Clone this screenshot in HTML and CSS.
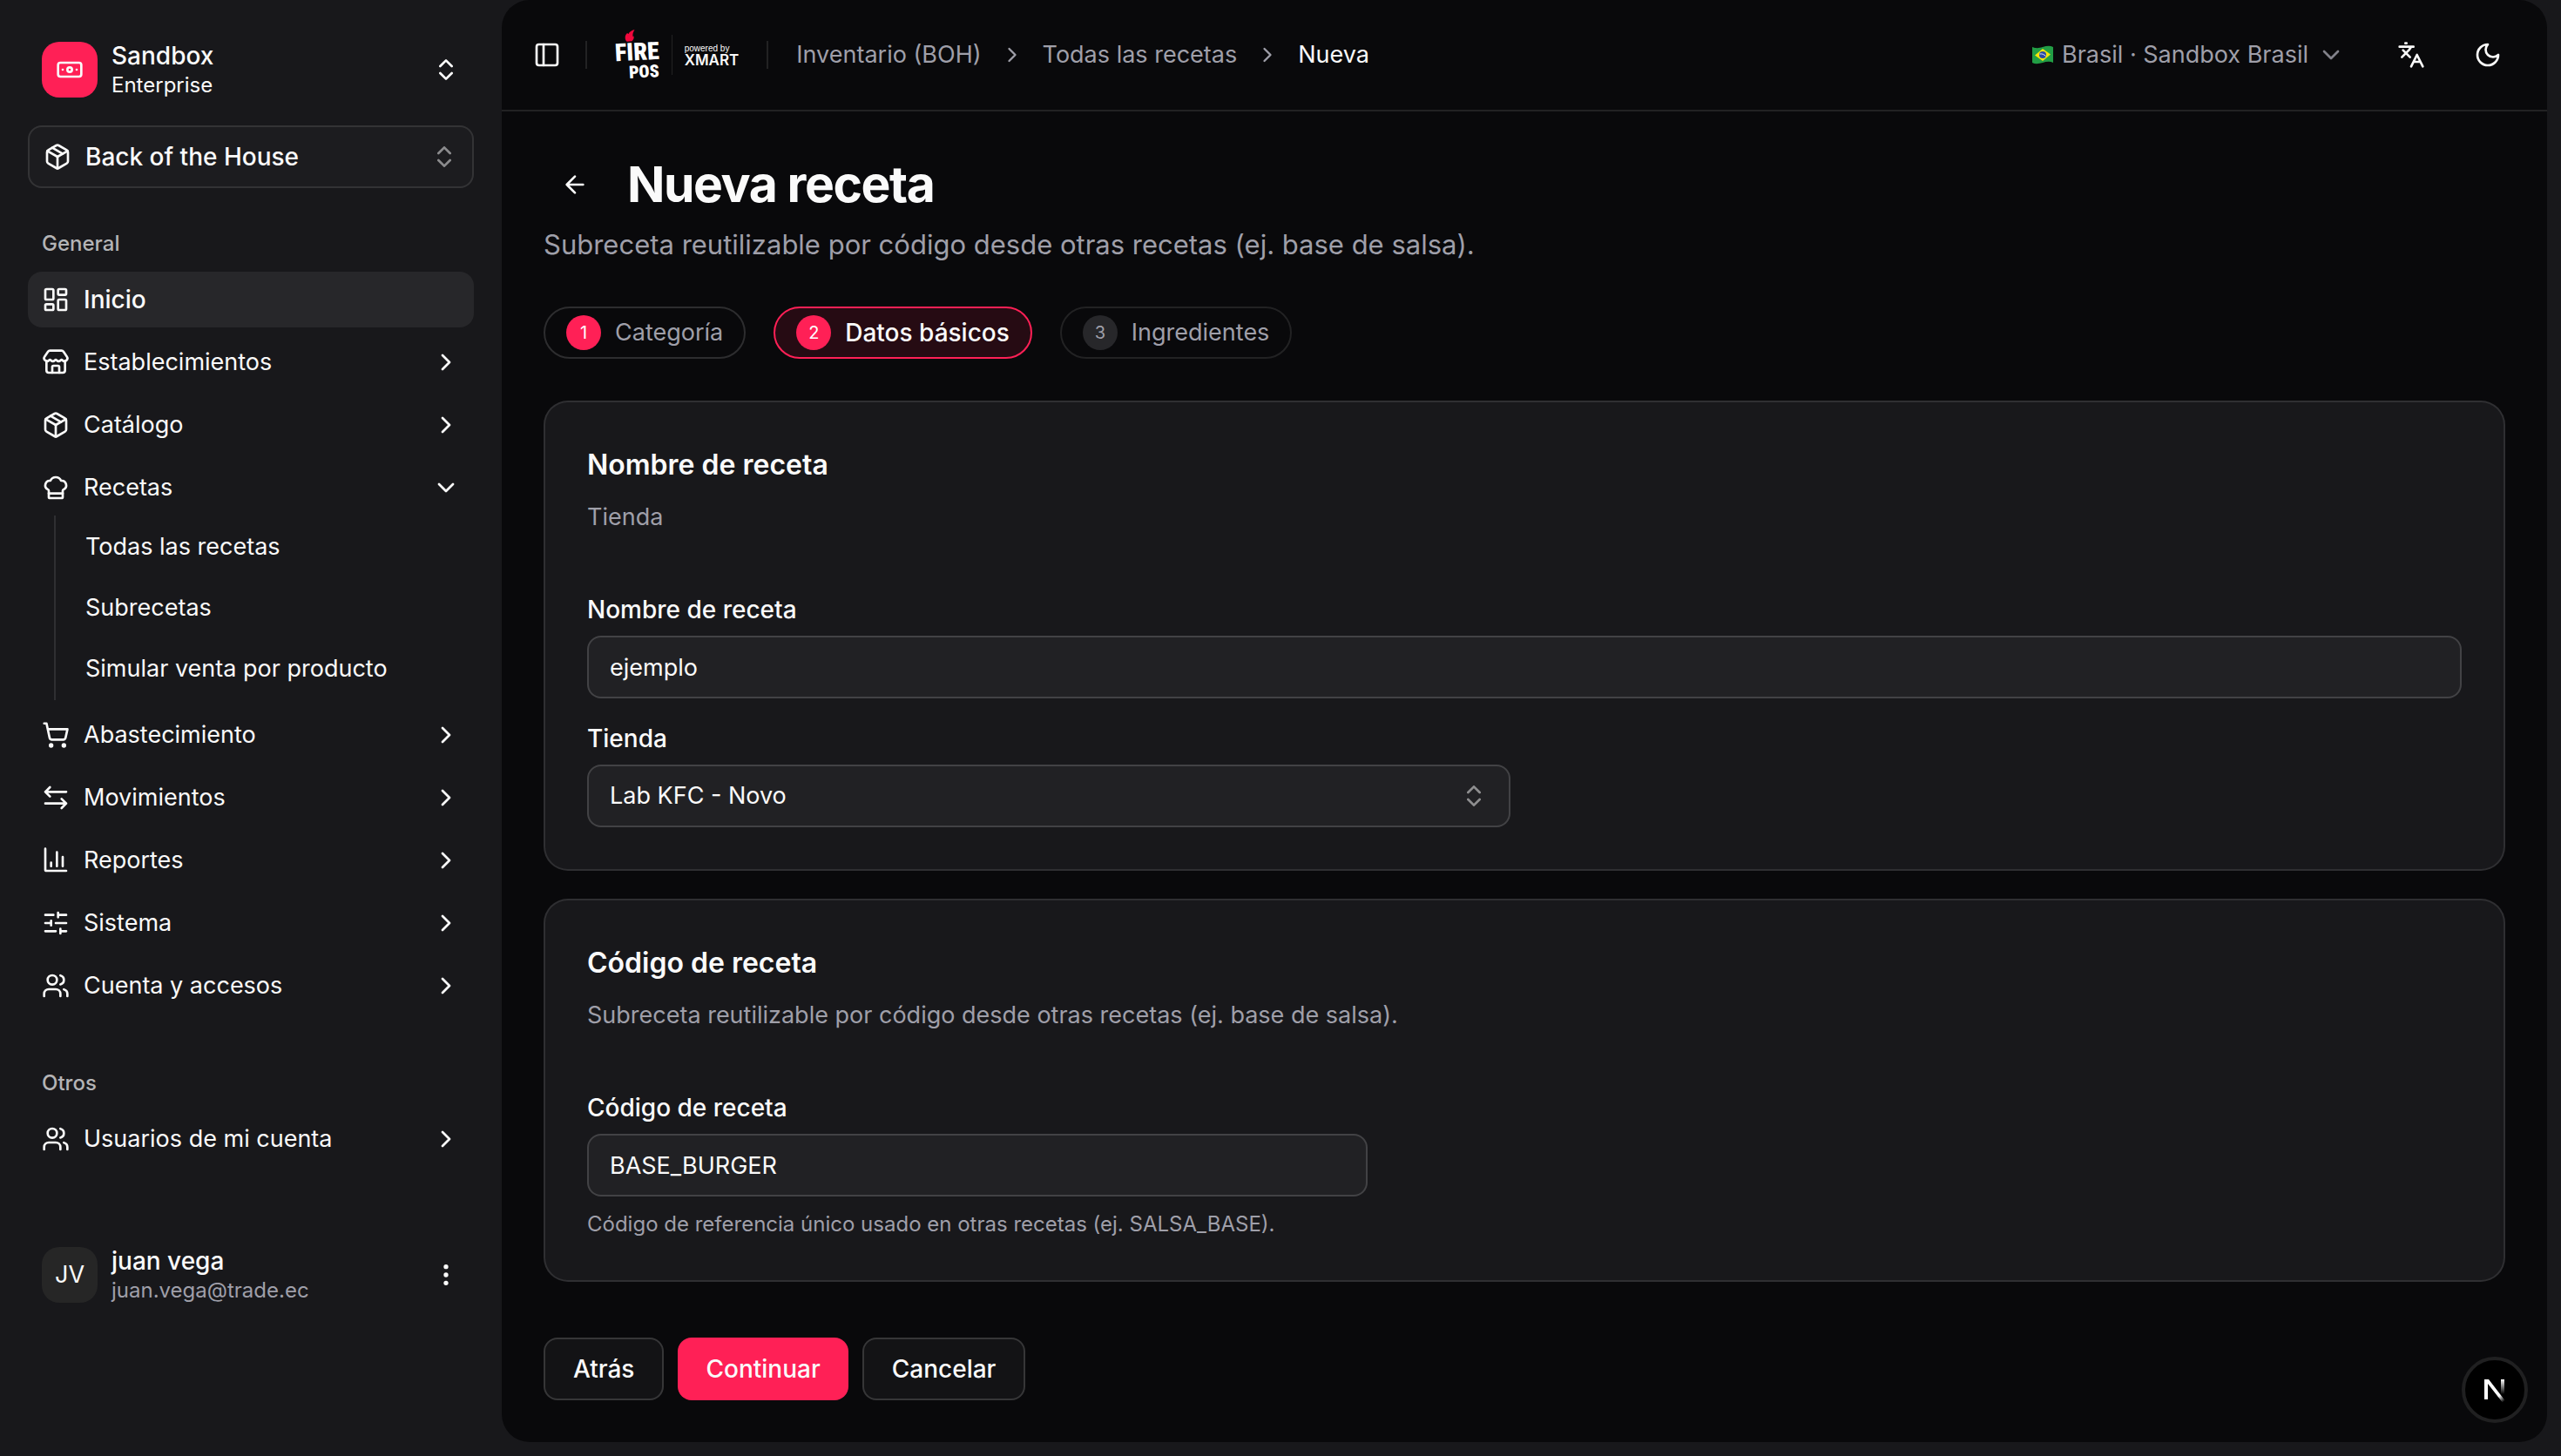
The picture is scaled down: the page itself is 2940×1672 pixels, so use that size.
FILE: index.html
```html
<!DOCTYPE html>
<html lang="es">
<head>
<meta charset="utf-8">
<meta name="viewport" content="width=device-width, initial-scale=1">
<title>Nueva receta</title>
<link rel="stylesheet" href="styles.css">
</head>
<body>
<svg class="sprite" aria-hidden="true">
  <symbol id="i-banknote" viewBox="0 0 24 24"><rect width="20" height="12" x="2" y="6" rx="2"/><circle cx="12" cy="12" r="2"/><path d="M6 12h.01M18 12h.01"/></symbol>
  <symbol id="i-updown" viewBox="0 0 24 24"><path d="m7 15 5 5 5-5"/><path d="m7 9 5-5 5 5"/></symbol>
  <symbol id="i-package" viewBox="0 0 24 24"><path d="M11 21.73a2 2 0 0 0 2 0l7-4A2 2 0 0 0 21 16V8a2 2 0 0 0-1-1.73l-7-4a2 2 0 0 0-2 0l-7 4A2 2 0 0 0 3 8v8a2 2 0 0 0 1 1.73z"/><path d="M12 22V12"/><path d="M3.29 7 12 12l8.71-5"/><path d="m7.5 4.27 9 5.15"/></symbol>
  <symbol id="i-dashboard" viewBox="0 0 24 24"><rect width="7" height="9" x="3" y="3" rx="1"/><rect width="7" height="5" x="14" y="3" rx="1"/><rect width="7" height="9" x="14" y="12" rx="1"/><rect width="7" height="5" x="3" y="16" rx="1"/></symbol>
  <symbol id="i-store" viewBox="0 0 24 24"><path d="M15 21v-5a1 1 0 0 0-1-1h-4a1 1 0 0 0-1 1v5"/><path d="M17.774 10.31a1.12 1.12 0 0 0-1.549 0 2.5 2.5 0 0 1-3.451 0 1.12 1.12 0 0 0-1.548 0 2.5 2.5 0 0 1-3.452 0 1.12 1.12 0 0 0-1.549 0 2.5 2.5 0 0 1-3.77-3.248l2.889-4.184A2 2 0 0 1 7 2h10a2 2 0 0 1 1.653.873l2.895 4.192a2.5 2.5 0 0 1-3.774 3.244"/><path d="M4 10.95V19a2 2 0 0 0 2 2h12a2 2 0 0 0 2-2v-8.05"/></symbol>
  <symbol id="i-chef" viewBox="0 0 24 24"><path d="M17 21a1 1 0 0 0 1-1v-5.35c0-.457.316-.844.727-1.041a4 4 0 0 0-2.134-7.589 5 5 0 0 0-9.186 0 4 4 0 0 0-2.134 7.588c.411.198.727.585.727 1.041V20a1 1 0 0 0 1 1Z"/><path d="M6 17h12"/></symbol>
  <symbol id="i-cart" viewBox="0 0 24 24"><circle cx="8" cy="21" r="1"/><circle cx="19" cy="21" r="1"/><path d="M2.05 2.05h2l2.66 12.42a2 2 0 0 0 2 1.58h9.78a2 2 0 0 0 1.95-1.57l1.65-7.43H5.12"/></symbol>
  <symbol id="i-arrows" viewBox="0 0 24 24"><path d="m7 3-4 4 4 4M3 7h18M17 21l4-4-4-4M21 17H3"/></symbol>
  <symbol id="i-chart" viewBox="0 0 24 24"><path d="M3 2v18a1 1 0 0 0 1 1h17M13 17V5M18 17V9M8 17v-3"/></symbol>
  <symbol id="i-sliders" viewBox="0 0 24 24"><path d="M10 5H3M12 19H3M14 3v4M16 17v4M21 12h-9M21 19h-5M21 5h-7M8 10v4M8 12H3"/></symbol>
  <symbol id="i-users" viewBox="0 0 24 24"><path d="M16 21v-2a4 4 0 0 0-4-4H6a4 4 0 0 0-4 4v2"/><path d="M16 3.128a4 4 0 0 1 0 7.744"/><path d="M22 21v-2a4 4 0 0 0-3-3.87"/><circle cx="9" cy="7" r="4"/></symbol>
  <symbol id="i-right" viewBox="0 0 24 24"><path d="m9 18 6-6-6-6"/></symbol>
  <symbol id="i-down" viewBox="0 0 24 24"><path d="m6 9 6 6 6-6"/></symbol>
  <symbol id="i-dots" viewBox="0 0 24 24"><circle cx="12" cy="12" r="1"/><circle cx="12" cy="5" r="1"/><circle cx="12" cy="19" r="1"/></symbol>
  <symbol id="i-panel" viewBox="0 0 24 24"><rect width="18" height="18" x="3" y="3" rx="2"/><path d="M9 3v18"/></symbol>
  <symbol id="i-back" viewBox="0 0 24 24"><path d="m12 19-7-7 7-7M19 12H5"/></symbol>
  <symbol id="i-lang" viewBox="0 0 24 24"><path d="m5 8 6 6M4 14l6-6 2-3M2 5h12M7 2h1M22 22l-5-10-5 10M14 18h6"/></symbol>
  <symbol id="i-moon" viewBox="0 0 24 24"><path d="M12 3a6 6 0 0 0 9 9 9 9 0 1 1-9-9Z"/></symbol>
</svg>

<div class="app">
  <aside class="sidebar">
    <button class="team" type="button">
      <span class="team-logo"><svg class="icon"><use href="#i-banknote"/></svg></span>
      <span class="who"><span class="who-name">Sandbox</span><span class="who-sub">Enterprise</span></span>
      <svg class="icon"><use href="#i-updown"/></svg>
    </button>
    <button class="module" type="button">
      <svg class="icon"><use href="#i-package"/></svg>
      <span class="grow">Back of the House</span>
      <svg class="icon dim"><use href="#i-updown"/></svg>
    </button>

    <nav class="group" aria-label="General">
      <h2 class="group-label">General</h2>
      <ul class="menu">
        <li><a class="item active" href="#"><svg class="icon"><use href="#i-dashboard"/></svg><span class="grow">Inicio</span></a></li>
        <li><a class="item" href="#"><svg class="icon"><use href="#i-store"/></svg><span class="grow">Establecimientos</span><svg class="icon"><use href="#i-right"/></svg></a></li>
        <li><a class="item" href="#"><svg class="icon"><use href="#i-package"/></svg><span class="grow">Catálogo</span><svg class="icon"><use href="#i-right"/></svg></a></li>
        <li><a class="item" href="#"><svg class="icon"><use href="#i-chef"/></svg><span class="grow">Recetas</span><svg class="icon"><use href="#i-down"/></svg></a>
          <ul class="submenu">
            <li><a class="subitem" href="#">Todas las recetas</a></li>
            <li><a class="subitem" href="#">Subrecetas</a></li>
            <li><a class="subitem" href="#">Simular venta por producto</a></li>
          </ul>
        </li>
        <li><a class="item" href="#"><svg class="icon"><use href="#i-cart"/></svg><span class="grow">Abastecimiento</span><svg class="icon"><use href="#i-right"/></svg></a></li>
        <li><a class="item" href="#"><svg class="icon"><use href="#i-arrows"/></svg><span class="grow">Movimientos</span><svg class="icon"><use href="#i-right"/></svg></a></li>
        <li><a class="item" href="#"><svg class="icon"><use href="#i-chart"/></svg><span class="grow">Reportes</span><svg class="icon"><use href="#i-right"/></svg></a></li>
        <li><a class="item" href="#"><svg class="icon"><use href="#i-sliders"/></svg><span class="grow">Sistema</span><svg class="icon"><use href="#i-right"/></svg></a></li>
        <li><a class="item" href="#"><svg class="icon"><use href="#i-users"/></svg><span class="grow">Cuenta y accesos</span><svg class="icon"><use href="#i-right"/></svg></a></li>
      </ul>
    </nav>

    <nav class="group" aria-label="Otros">
      <h2 class="group-label">Otros</h2>
      <ul class="menu">
        <li><a class="item" href="#"><svg class="icon"><use href="#i-users"/></svg><span class="grow">Usuarios de mi cuenta</span><svg class="icon"><use href="#i-right"/></svg></a></li>
      </ul>
    </nav>

    <button class="team user" type="button">
      <span class="avatar">JV</span>
      <span class="who"><span class="who-name">juan vega</span><span class="who-sub muted">juan.vega@trade.ec</span></span>
      <svg class="icon"><use href="#i-dots"/></svg>
    </button>
  </aside>

  <main class="panel">
    <header class="topbar">
      <button class="icon-btn" type="button" aria-label="Alternar barra lateral"><svg class="icon"><use href="#i-panel"/></svg></button>
      <span class="rule"></span>
      <a class="brand" href="#">
        <span class="brand-fire">
          <svg class="flame" viewBox="0 0 12 14"><path d="M11.500 0C8 1 5.500 2.500 4.500 5L3 4C1 6 .4 8 .8 10.500 1.200 12.500 2 13.500 3 13.800L8.500 13.200C10.500 11.500 11 9.500 10.500 7.500L9.500 8C9 5 10 2.500 11.500 0Z"/></svg>
          <span class="brand-top">FIRE</span>
          <span class="brand-pos">POS</span>
        </span>
        <span class="brand-by"><span class="brand-small">powered by</span><span class="brand-x">XMART</span></span>
      </a>
      <span class="rule"></span>
      <nav class="crumbs" aria-label="Ruta">
        <a href="#">Inventario (BOH)</a>
        <svg class="icon small"><use href="#i-right"/></svg>
        <a href="#">Todas las recetas</a>
        <svg class="icon small"><use href="#i-right"/></svg>
        <span class="current">Nueva</span>
      </nav>
      <button class="store" type="button">
        <svg class="flag" viewBox="0 0 24 22"><path fill="#229e45" d="M0 2c5 2 8 1 12 0s8-2 12 0v18c-4-2-8-1-12 0s-8 2-12 0z"/><path fill="#f8e509" d="M12 4l9 6.500-9 7.500-9-6.500z"/><circle cx="12" cy="11" r="4" fill="#2b49a3"/><path d="M8.500 10c3-.500 5 .500 7 2.500" fill="none" stroke="#dfe6f5"/></svg>
        <span>Brasil · Sandbox Brasil</span>
        <svg class="icon"><use href="#i-down"/></svg>
      </button>
      <button class="icon-btn" type="button" aria-label="Idioma"><svg class="icon"><use href="#i-lang"/></svg></button>
      <button class="icon-btn" type="button" aria-label="Tema"><svg class="icon"><use href="#i-moon"/></svg></button>
    </header>

    <form class="content">
      <div class="heading">
        <a class="back" href="#" aria-label="Volver"><svg class="icon"><use href="#i-back"/></svg></a>
        <h1>Nueva receta</h1>
      </div>
      <p class="lead">Subreceta reutilizable por código desde otras recetas (ej. base de salsa).</p>

      <ol class="steps">
        <li class="step done"><span class="num">1</span>Categoría</li>
        <li class="step now"><span class="num">2</span>Datos básicos</li>
        <li class="step"><span class="num">3</span>Ingredientes</li>
      </ol>

      <div class="cards">
        <section class="card">
          <h2 class="card-title">Nombre de receta</h2>
          <p class="card-desc">Tienda</p>
          <div class="fields">
            <div class="field">
              <label for="name">Nombre de receta</label>
              <input id="name" type="text" value="ejemplo">
            </div>
            <div class="field half">
              <label for="shop">Tienda</label>
              <div class="select">
                <select id="shop"><option>Lab KFC - Novo</option></select>
                <svg class="icon dim"><use href="#i-updown"/></svg>
              </div>
            </div>
          </div>
        </section>
        <section class="card">
          <h2 class="card-title">Código de receta</h2>
          <p class="card-desc">Subreceta reutilizable por código desde otras recetas (ej. base de salsa).</p>
          <div class="fields">
            <div class="field code">
              <label for="code">Código de receta</label>
              <input id="code" type="text" value="BASE_BURGER" aria-describedby="code-help">
              <p class="help" id="code-help">Código de referencia único usado en otras recetas (ej. SALSA_BASE).</p>
            </div>
          </div>
        </section>
      </div>

      <div class="actions">
        <button class="btn" type="button">Atrás</button>
        <button class="btn primary" type="submit">Continuar</button>
        <button class="btn" type="button">Cancelar</button>
      </div>
    </form>
  </main>
</div>

<button class="devtools" type="button" aria-label="Herramientas de desarrollo">
  <svg viewBox="0 0 40 40" fill="none">
    <defs>
      <linearGradient id="fade-diag" x1="20" y1="20" x2="31" y2="33" gradientUnits="userSpaceOnUse"><stop offset=".5" stop-color="#fff"/><stop offset="1" stop-color="#fff" stop-opacity="0"/></linearGradient>
      <linearGradient id="fade-stem" x1="0" y1="8" x2="0" y2="25" gradientUnits="userSpaceOnUse"><stop stop-color="#fff"/><stop offset="1" stop-color="#fff" stop-opacity="0"/></linearGradient>
    </defs>
    <path d="M10 31V8" stroke="#fff" stroke-width="4"/>
    <path d="M8 8h5l20 26-3 2L12 13z" fill="url(#fade-diag)"/>
    <path d="M29 8v17" stroke="url(#fade-stem)" stroke-width="4"/>
  </svg>
</button>
</body>
</html>
```
FILE: styles.css
```css
:root {
  --bg: #09090b;
  --surface: #18181b;
  --text: #fafafa;
  --muted: #9f9fa9;
  --line: rgba(255, 255, 255, 0.1);
  --input-line: rgba(255, 255, 255, 0.15);
  --input-bg: rgba(255, 255, 255, 0.045);
  --primary: #ff2056;
}

* {
  box-sizing: border-box;
}

body {
  margin: 0;
  background: var(--surface);
  color: var(--text);
  font: 400 27px/40px Inter, "Liberation Sans", sans-serif;
}

h1, h2, p, ul, ol {
  margin: 0;
  padding: 0;
}

ul, ol {
  list-style: none;
}

a {
  color: inherit;
  text-decoration: none;
}

button, input, select {
  margin: 0;
  color: inherit;
  font: inherit;
}

button {
  background: none;
  border: 0;
  padding: 0;
  text-align: left;
}

.sprite {
  display: none;
}

.icon {
  flex: none;
  width: 32px;
  height: 32px;
  fill: none;
  stroke: currentColor;
  stroke-width: 2;
  stroke-linecap: round;
  stroke-linejoin: round;
}

.icon.small {
  width: 28px;
  height: 28px;
}

.dim {
  opacity: 0.5;
}

.grow {
  flex: 1;
}

.app {
  display: grid;
  grid-template-columns: 576px minmax(0, 1fr);
  min-height: 100vh;
}

/* Sidebar */

.sidebar {
  display: flex;
  flex-direction: column;
  padding: 32px;
}

.team {
  display: flex;
  align-items: center;
  gap: 16px;
  height: 96px;
  padding: 16px;
}

.team-logo, .avatar {
  display: grid;
  place-items: center;
  width: 64px;
  height: 64px;
  border-radius: 20px;
}

.team-logo {
  background: var(--primary);
}

.avatar {
  background: #262626;
}

.who {
  display: flex;
  flex: 1;
  flex-direction: column;
}

.who-name {
  font-size: 28px;
  font-weight: 500;
  line-height: 36px;
}

.who-sub {
  font-size: 24px;
  line-height: 32px;
}

.muted {
  color: var(--muted);
}

.module {
  display: flex;
  align-items: center;
  gap: 16px;
  height: 72px;
  margin-top: 16px;
  padding: 0 16px;
  border: 2px solid var(--line);
  border-radius: 16px;
  background: rgba(255, 255, 255, 0.02);
  font-size: 28px;
  font-weight: 500;
}

.group {
  margin-top: 32px;
}

.group + .group {
  margin-top: 48px;
}

.group-label {
  padding: 0 16px;
  color: #b4b4b6;
  font-size: 24px;
  font-weight: 500;
  line-height: 64px;
}

.menu {
  display: flex;
  flex-direction: column;
  gap: 8px;
}

.item {
  display: flex;
  align-items: center;
  gap: 16px;
  height: 64px;
  padding: 0 16px;
  border-radius: 16px;
}

.item.active {
  background: #27272a;
  font-size: 28px;
  font-weight: 500;
}

.submenu {
  display: flex;
  flex-direction: column;
  gap: 6px;
  margin-left: 30px;
  padding: 4px 0 4px 18px;
  border-left: 2px solid var(--line);
}

.subitem {
  display: block;
  padding: 0 16px;
  line-height: 64px;
}

.user {
  margin-top: 76px;
}

/* Main panel */

.panel {
  margin: 0 16px 16px 0;
  border-radius: 32px;
  background: var(--bg);
}

.topbar {
  display: flex;
  align-items: center;
  height: 128px;
  padding: 0 48px 0 32px;
  border-bottom: 2px solid var(--line);
}

.icon-btn {
  display: grid;
  place-items: center;
  width: 40px;
  height: 56px;
}

.rule {
  width: 2px;
  height: 32px;
  background: var(--line);
}

.topbar > .icon-btn:first-child {
  margin-right: 24px;
}

.store + .icon-btn {
  margin: 0 48px 0 56px;
}

.brand {
  display: flex;
  align-items: center;
  gap: 14px;
  margin: 0 32px;
}

.brand-fire {
  display: grid;
  justify-items: end;
  color: #fff;
  font-family: "Roboto Condensed", "Open Sans Condensed", "Liberation Sans Narrow", Roboto, sans-serif;
  font-weight: 900;
}

.flame {
  width: 12px;
  height: 14px;
  justify-self: start;
  margin-left: 11px;
  fill: #f0083c;
}

.brand-top {
  font-size: 28px;
  line-height: 24px;
  transform: rotate(-3deg);
}

.brand-pos {
  font-size: 20px;
  line-height: 20px;
  transform: rotate(-3deg);
}

.brand-by {
  display: grid;
  align-content: center;
  height: 46px;
  padding-left: 14px;
  border-left: 1px solid var(--line);
}

.brand-small {
  font: 400 10px/12px "Liberation Sans", sans-serif;
}

.brand-x {
  font-size: 17px;
  font-weight: 600;
  line-height: 14px;
}

.crumbs {
  display: flex;
  flex: 1;
  align-items: center;
  gap: 21px;
  margin-left: 32px;
  color: var(--muted);
}

.current {
  color: var(--text);
}

.store {
  display: flex;
  align-items: center;
  gap: 10px;
  color: var(--muted);
}

.store .icon {
  opacity: 0.8;
}

.flag {
  width: 24px;
  height: 22px;
}

.content {
  padding: 48px;
}

.heading {
  display: flex;
  align-items: center;
  gap: 24px;
}

.back {
  display: grid;
  place-items: center;
  width: 72px;
  height: 72px;
}

h1 {
  font-size: 57px;
  font-weight: 700;
  line-height: 72px;
  letter-spacing: -0.025em;
}

.lead {
  margin-top: 8px;
  color: var(--muted);
  font-size: 31px;
  line-height: 50px;
}

.steps {
  display: flex;
  gap: 32px;
  margin-top: 46px;
}

.step {
  display: flex;
  align-items: center;
  gap: 16px;
  height: 60px;
  padding: 0 24px;
  border: 2px solid var(--line);
  border-radius: 30px;
  color: var(--muted);
}

.num {
  display: grid;
  place-items: center;
  width: 40px;
  height: 40px;
  border-radius: 50%;
  background: #27272a;
  font-size: 20px;
  font-weight: 400;
}

.step.done {
  border-color: var(--input-line);
}

.step.now {
  border-color: var(--primary);
  background: rgba(255, 32, 86, 0.12);
  color: var(--text);
  font-size: 28px;
  font-weight: 500;
}

.done .num, .now .num {
  background: var(--primary);
  color: #fff;
}

.cards {
  display: grid;
  gap: 32px;
  margin-top: 48px;
}

.card {
  padding: 48px;
  border: 2px solid var(--line);
  border-radius: 28px;
  background: var(--surface);
}

.card-title {
  font-size: 32px;
  font-weight: 600;
  line-height: 48px;
}

.card-desc {
  margin-top: 16px;
  color: var(--muted);
}

.fields {
  display: grid;
  gap: 32px;
  margin-top: 72px;
}

.field {
  display: grid;
  gap: 16px;
}

.field label {
  font-size: 28px;
  font-weight: 500;
  line-height: 28px;
}

.half {
  width: calc(50% - 16px);
}

.code {
  width: 100%;
  max-width: 896px;
}

input, select {
  width: 100%;
  height: 72px;
  padding: 0 24px;
  border: 2px solid var(--input-line);
  border-radius: 16px;
  background: var(--input-bg);
  appearance: none;
}

.select {
  display: grid;
  align-items: center;
}

.select > * {
  grid-area: 1 / 1;
}

.select .icon {
  justify-self: end;
  margin-right: 26px;
  pointer-events: none;
}

.help {
  color: var(--muted);
  font-size: 24px;
  line-height: 32px;
}

.actions {
  display: flex;
  gap: 16px;
  margin-top: 64px;
}

.btn {
  height: 72px;
  padding: 0 32px;
  border: 2px solid var(--input-line);
  border-radius: 16px;
  background: var(--input-bg);
  font-size: 28px;
  font-weight: 500;
}

.btn.primary {
  border: 0;
  background: var(--primary);
}

/* Floating badge over the panel corner */

.devtools {
  position: fixed;
  right: 38px;
  bottom: 38px;
  display: grid;
  place-items: center;
  width: 76px;
  height: 76px;
  border: 4px solid #202021;
  border-radius: 50%;
  background: #000;
}

.devtools svg {
  width: 40px;
  height: 40px;
}
```
